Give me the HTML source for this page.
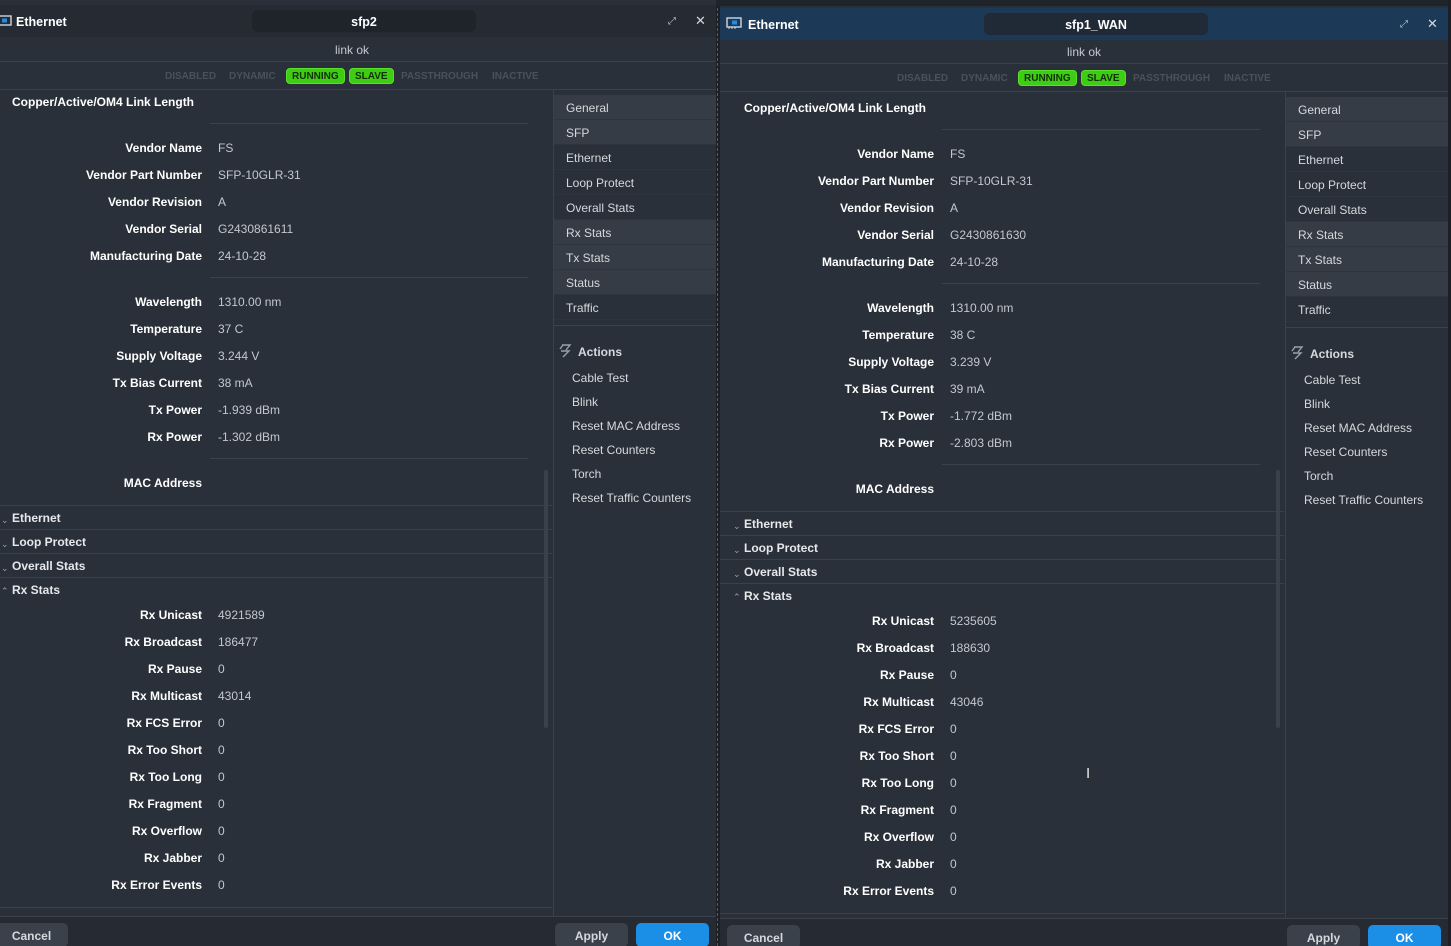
<!DOCTYPE html>
<html><head><meta charset="utf-8"><style>
*{margin:0;padding:0;box-sizing:border-box}
html,body{width:1451px;height:946px;overflow:hidden}
body{background:#1c2026;font-family:"Liberation Sans",sans-serif;font-size:12px;color:#fff;position:relative}
.top{position:absolute;left:0;top:0;width:1451px;height:6px;background:#1f242b}
.win{position:absolute;top:0;width:728px;height:946px;background:#2a3039;overflow:hidden}
.a{position:absolute;white-space:nowrap;line-height:16px}
.hdr{position:absolute;left:0;width:728px}
.tb{top:5px;height:32px;background:#262b33}
.blue .tb{background:#1c3a57}
.pill{position:absolute;left:264px;top:5px;width:224px;height:22px;background:#1f242b;border-radius:6px;text-align:center;line-height:24px;font-weight:bold;font-size:12.5px}
.blue .pill{background:#1f2a36}
.ttl{left:28px;top:9px;font-weight:bold;font-size:12.5px}
.lk{top:37px;height:25px;border-bottom:1px solid #3a414b;text-align:center;line-height:26px;color:#c5cad1;font-size:12px}
.st{top:62px;height:28px;border-bottom:1px solid #3a414b;font-size:10px;font-weight:bold;color:#4a5159}
.bd{position:absolute;top:6px;height:16px;line-height:15px;padding:0 5px;border-radius:4px;background:#3fcc14;color:#10300a;border:1px solid #59e02c}
.st .a{line-height:13px}
.l{right:514px;font-weight:bold;font-size:12px;color:#fff}
.v{left:230px;color:#c3c8cf;font-size:12px}
.ln{position:absolute;height:1px;background:#3a414b}
.sec{left:24px;font-weight:bold;color:#e6e8eb}
.chev{left:13px;color:#9aa1a9;font-size:9px}
.sb{position:absolute;left:565px;top:90px;width:163px;height:830px;background:#2a3039;border-left:1px solid #3a414b}
.si{position:absolute;left:0;width:163px;height:25px;line-height:27px;padding-left:12px;color:#d5d9de;border-bottom:1px solid #2f353e}
.si.h{background:#363c45}
.ai{position:absolute;left:18px;color:#d5d9de;line-height:16px}
.ft{position:absolute;left:0;top:916px;width:728px;height:40px;background:#262b33;border-top:1px solid #3a414b}
.btn{position:absolute;top:6px;height:24px;border-radius:5px;background:#3a414b;color:#d5d9de;text-align:center;line-height:26px;font-weight:bold}
.ok{background:#1b8fe6;color:#fff}
</style></head><body>
<div class="top"></div>
<div style="position:absolute;left:70px;top:0;width:68px;height:2px;background:#2e8be0"></div>

<!-- LEFT WINDOW -->
<div class="win" style="left:-12px">
 <div class="hdr tb">
  <svg class="a" style="left:10px;top:10px" width="14" height="12" viewBox="0 0 14 12"><rect x="1" y="1" width="12" height="9" fill="none" stroke="#cfd6de" stroke-width="1.4"/><rect x="4" y="3.5" width="5" height="4" fill="#1f8fe6"/></svg>
  <div class="a ttl">Ethernet</div>
  <div class="pill">sfp2</div>
  <div class="a" style="left:680px;top:9px;color:#bfc5cc;font-size:10px">⤢</div>
  <div class="a" style="left:707px;top:8px;color:#d5d9de;font-size:13px">✕</div>
 </div>
 <div class="hdr lk">link ok</div>
 <div class="hdr st">
  <span class="a" style="left:177px;top:8px">DISABLED</span>
  <span class="a" style="left:241px;top:8px">DYNAMIC</span>
  <span class="bd" style="left:298px">RUNNING</span>
  <span class="bd" style="left:361px">SLAVE</span>
  <span class="a" style="left:413px;top:8px">PASSTHROUGH</span>
  <span class="a" style="left:504px;top:8px">INACTIVE</span>
 </div>
 <div class="a" style="left:24px;top:94px;font-weight:bold">Copper/Active/OM4 Link Length</div>
 <div class="ln" style="left:222px;top:123px;width:318px"></div>
 <div class="a l" style="top:140px">Vendor Name</div><div class="a v" style="top:140px">FS</div>
 <div class="a l" style="top:167px">Vendor Part Number</div><div class="a v" style="top:167px">SFP-10GLR-31</div>
 <div class="a l" style="top:194px">Vendor Revision</div><div class="a v" style="top:194px">A</div>
 <div class="a l" style="top:221px">Vendor Serial</div><div class="a v" style="top:221px">G2430861611</div>
 <div class="a l" style="top:248px">Manufacturing Date</div><div class="a v" style="top:248px">24-10-28</div>
 <div class="ln" style="left:222px;top:277px;width:318px"></div>
 <div class="a l" style="top:294px">Wavelength</div><div class="a v" style="top:294px">1310.00 nm</div>
 <div class="a l" style="top:321px">Temperature</div><div class="a v" style="top:321px">37 C</div>
 <div class="a l" style="top:348px">Supply Voltage</div><div class="a v" style="top:348px">3.244 V</div>
 <div class="a l" style="top:375px">Tx Bias Current</div><div class="a v" style="top:375px">38 mA</div>
 <div class="a l" style="top:402px">Tx Power</div><div class="a v" style="top:402px">-1.939 dBm</div>
 <div class="a l" style="top:429px">Rx Power</div><div class="a v" style="top:429px">-1.302 dBm</div>
 <div class="ln" style="left:222px;top:458px;width:318px"></div>
 <div class="a l" style="top:475px">MAC Address</div>
 <div class="ln" style="left:0;top:505px;width:564px"></div>
 <div class="a chev" style="top:512px">⌄</div><div class="a sec" style="top:510px">Ethernet</div>
 <div class="ln" style="left:0;top:529px;width:564px"></div>
 <div class="a chev" style="top:536px">⌄</div><div class="a sec" style="top:534px">Loop Protect</div>
 <div class="ln" style="left:0;top:553px;width:564px"></div>
 <div class="a chev" style="top:560px">⌄</div><div class="a sec" style="top:558px">Overall Stats</div>
 <div class="ln" style="left:0;top:577px;width:564px"></div>
 <div class="a chev" style="top:583px">⌃</div><div class="a sec" style="top:582px">Rx Stats</div>
 <div class="a l" style="top:607px">Rx Unicast</div><div class="a v" style="top:607px">4921589</div>
 <div class="a l" style="top:634px">Rx Broadcast</div><div class="a v" style="top:634px">186477</div>
 <div class="a l" style="top:661px">Rx Pause</div><div class="a v" style="top:661px">0</div>
 <div class="a l" style="top:688px">Rx Multicast</div><div class="a v" style="top:688px">43014</div>
 <div class="a l" style="top:715px">Rx FCS Error</div><div class="a v" style="top:715px">0</div>
 <div class="a l" style="top:742px">Rx Too Short</div><div class="a v" style="top:742px">0</div>
 <div class="a l" style="top:769px">Rx Too Long</div><div class="a v" style="top:769px">0</div>
 <div class="a l" style="top:796px">Rx Fragment</div><div class="a v" style="top:796px">0</div>
 <div class="a l" style="top:823px">Rx Overflow</div><div class="a v" style="top:823px">0</div>
 <div class="a l" style="top:850px">Rx Jabber</div><div class="a v" style="top:850px">0</div>
 <div class="a l" style="top:877px">Rx Error Events</div><div class="a v" style="top:877px">0</div>
 <div class="ln" style="left:0;top:907px;width:564px"></div>
 <div style="position:absolute;left:556px;top:470px;width:4px;height:258px;background:#3a414b;border-radius:2px"></div>
 <div class="sb">
  <div class="si h" style="top:5px">General</div>
  <div class="si h" style="top:30px">SFP</div>
  <div class="si" style="top:55px">Ethernet</div>
  <div class="si" style="top:80px">Loop Protect</div>
  <div class="si" style="top:105px">Overall Stats</div>
  <div class="si h" style="top:130px">Rx Stats</div>
  <div class="si h" style="top:155px">Tx Stats</div>
  <div class="si h" style="top:180px">Status</div>
  <div class="si" style="top:205px">Traffic</div>
  <div class="ln" style="left:0;top:235px;width:163px"></div>
  <svg class="a" style="left:4px;top:254px" width="14" height="14" viewBox="0 0 14 14"><path d="M4 1h8L8 6M3 7h8L5 13M2 5l3-4" fill="none" stroke="#9aa1a9" stroke-width="1.4"/></svg>
  <div class="a" style="left:24px;top:254px;font-weight:bold;color:#d5d9de">Actions</div>
  <div class="ai" style="top:280px">Cable Test</div>
  <div class="ai" style="top:304px">Blink</div>
  <div class="ai" style="top:328px">Reset MAC Address</div>
  <div class="ai" style="top:352px">Reset Counters</div>
  <div class="ai" style="top:376px">Torch</div>
  <div class="ai" style="top:400px">Reset Traffic Counters</div>
 </div>
 <div class="ft">
  <div class="btn" style="left:7px;width:73px">Cancel</div>
  <div class="btn" style="left:567px;width:73px">Apply</div>
  <div class="btn ok" style="left:648px;width:73px">OK</div>
 </div>
</div>

<div style="position:absolute;left:717px;top:8px;width:1px;height:938px;border-left:1px dashed #2a6a9a"></div>

<!-- RIGHT WINDOW -->
<div class="win blue" style="left:720px;top:6px;height:940px">
 <div class="hdr tb" style="top:2px">
  <svg class="a" style="left:6px;top:9px" width="16" height="13" viewBox="0 0 16 13"><rect x="1" y="1" width="14" height="9" fill="none" stroke="#cfd6de" stroke-width="1.4"/><rect x="6" y="3.5" width="5" height="4" fill="#1f8fe6"/><path d="M3 10v2M6 10v2M9 10v2" stroke="#cfd6de"/></svg>
  <div class="a ttl">Ethernet</div>
  <div class="pill">sfp1_WAN</div>
  <div class="a" style="left:680px;top:9px;color:#bfc5cc;font-size:10px">⤢</div>
  <div class="a" style="left:707px;top:8px;color:#d5d9de;font-size:13px">✕</div>
 </div>
 <div class="hdr lk" style="top:33px">link ok</div>
 <div class="hdr st" style="top:58px">
  <span class="a" style="left:177px;top:8px">DISABLED</span>
  <span class="a" style="left:241px;top:8px">DYNAMIC</span>
  <span class="bd" style="left:298px">RUNNING</span>
  <span class="bd" style="left:361px">SLAVE</span>
  <span class="a" style="left:413px;top:8px">PASSTHROUGH</span>
  <span class="a" style="left:504px;top:8px">INACTIVE</span>
 </div>
 <div class="a" style="left:24px;top:94px;font-weight:bold">Copper/Active/OM4 Link Length</div>
 <div class="ln" style="left:222px;top:123px;width:318px"></div>
 <div class="a l" style="top:140px">Vendor Name</div><div class="a v" style="top:140px">FS</div>
 <div class="a l" style="top:167px">Vendor Part Number</div><div class="a v" style="top:167px">SFP-10GLR-31</div>
 <div class="a l" style="top:194px">Vendor Revision</div><div class="a v" style="top:194px">A</div>
 <div class="a l" style="top:221px">Vendor Serial</div><div class="a v" style="top:221px">G2430861630</div>
 <div class="a l" style="top:248px">Manufacturing Date</div><div class="a v" style="top:248px">24-10-28</div>
 <div class="ln" style="left:222px;top:277px;width:318px"></div>
 <div class="a l" style="top:294px">Wavelength</div><div class="a v" style="top:294px">1310.00 nm</div>
 <div class="a l" style="top:321px">Temperature</div><div class="a v" style="top:321px">38 C</div>
 <div class="a l" style="top:348px">Supply Voltage</div><div class="a v" style="top:348px">3.239 V</div>
 <div class="a l" style="top:375px">Tx Bias Current</div><div class="a v" style="top:375px">39 mA</div>
 <div class="a l" style="top:402px">Tx Power</div><div class="a v" style="top:402px">-1.772 dBm</div>
 <div class="a l" style="top:429px">Rx Power</div><div class="a v" style="top:429px">-2.803 dBm</div>
 <div class="ln" style="left:222px;top:458px;width:318px"></div>
 <div class="a l" style="top:475px">MAC Address</div>
 <div class="ln" style="left:0;top:505px;width:564px"></div>
 <div class="a chev" style="top:512px">⌄</div><div class="a sec" style="top:510px">Ethernet</div>
 <div class="ln" style="left:0;top:529px;width:564px"></div>
 <div class="a chev" style="top:536px">⌄</div><div class="a sec" style="top:534px">Loop Protect</div>
 <div class="ln" style="left:0;top:553px;width:564px"></div>
 <div class="a chev" style="top:560px">⌄</div><div class="a sec" style="top:558px">Overall Stats</div>
 <div class="ln" style="left:0;top:577px;width:564px"></div>
 <div class="a chev" style="top:583px">⌃</div><div class="a sec" style="top:582px">Rx Stats</div>
 <div class="a l" style="top:607px">Rx Unicast</div><div class="a v" style="top:607px">5235605</div>
 <div class="a l" style="top:634px">Rx Broadcast</div><div class="a v" style="top:634px">188630</div>
 <div class="a l" style="top:661px">Rx Pause</div><div class="a v" style="top:661px">0</div>
 <div class="a l" style="top:688px">Rx Multicast</div><div class="a v" style="top:688px">43046</div>
 <div class="a l" style="top:715px">Rx FCS Error</div><div class="a v" style="top:715px">0</div>
 <div class="a l" style="top:742px">Rx Too Short</div><div class="a v" style="top:742px">0</div>
 <div class="a l" style="top:769px">Rx Too Long</div><div class="a v" style="top:769px">0</div>
 <div class="a l" style="top:796px">Rx Fragment</div><div class="a v" style="top:796px">0</div>
 <div class="a l" style="top:823px">Rx Overflow</div><div class="a v" style="top:823px">0</div>
 <div class="a l" style="top:850px">Rx Jabber</div><div class="a v" style="top:850px">0</div>
 <div class="a l" style="top:877px">Rx Error Events</div><div class="a v" style="top:877px">0</div>
 <div class="ln" style="left:0;top:907px;width:564px"></div>
 <div class="a" style="left:366px;top:760px;color:#e8e8e8;font-size:15px">I</div>
 <div style="position:absolute;left:556px;top:464px;width:4px;height:258px;background:#3a414b;border-radius:2px"></div>
 <div class="sb" style="top:86px">
  <div class="si h" style="top:5px">General</div>
  <div class="si h" style="top:30px">SFP</div>
  <div class="si" style="top:55px">Ethernet</div>
  <div class="si" style="top:80px">Loop Protect</div>
  <div class="si" style="top:105px">Overall Stats</div>
  <div class="si h" style="top:130px">Rx Stats</div>
  <div class="si h" style="top:155px">Tx Stats</div>
  <div class="si h" style="top:180px">Status</div>
  <div class="si" style="top:205px">Traffic</div>
  <div class="ln" style="left:0;top:235px;width:163px"></div>
  <svg class="a" style="left:4px;top:254px" width="14" height="14" viewBox="0 0 14 14"><path d="M4 1h8L8 6M3 7h8L5 13M2 5l3-4" fill="none" stroke="#9aa1a9" stroke-width="1.4"/></svg>
  <div class="a" style="left:24px;top:254px;font-weight:bold;color:#d5d9de">Actions</div>
  <div class="ai" style="top:280px">Cable Test</div>
  <div class="ai" style="top:304px">Blink</div>
  <div class="ai" style="top:328px">Reset MAC Address</div>
  <div class="ai" style="top:352px">Reset Counters</div>
  <div class="ai" style="top:376px">Torch</div>
  <div class="ai" style="top:400px">Reset Traffic Counters</div>
 </div>
 <div class="ft" style="top:912px">
  <div class="btn" style="left:7px;width:73px">Cancel</div>
  <div class="btn" style="left:567px;width:73px">Apply</div>
  <div class="btn ok" style="left:648px;width:73px">OK</div>
 </div>
</div>
<div style="position:absolute;left:1448px;top:0;width:3px;height:946px;background:#1c2026"></div>
</body></html>
